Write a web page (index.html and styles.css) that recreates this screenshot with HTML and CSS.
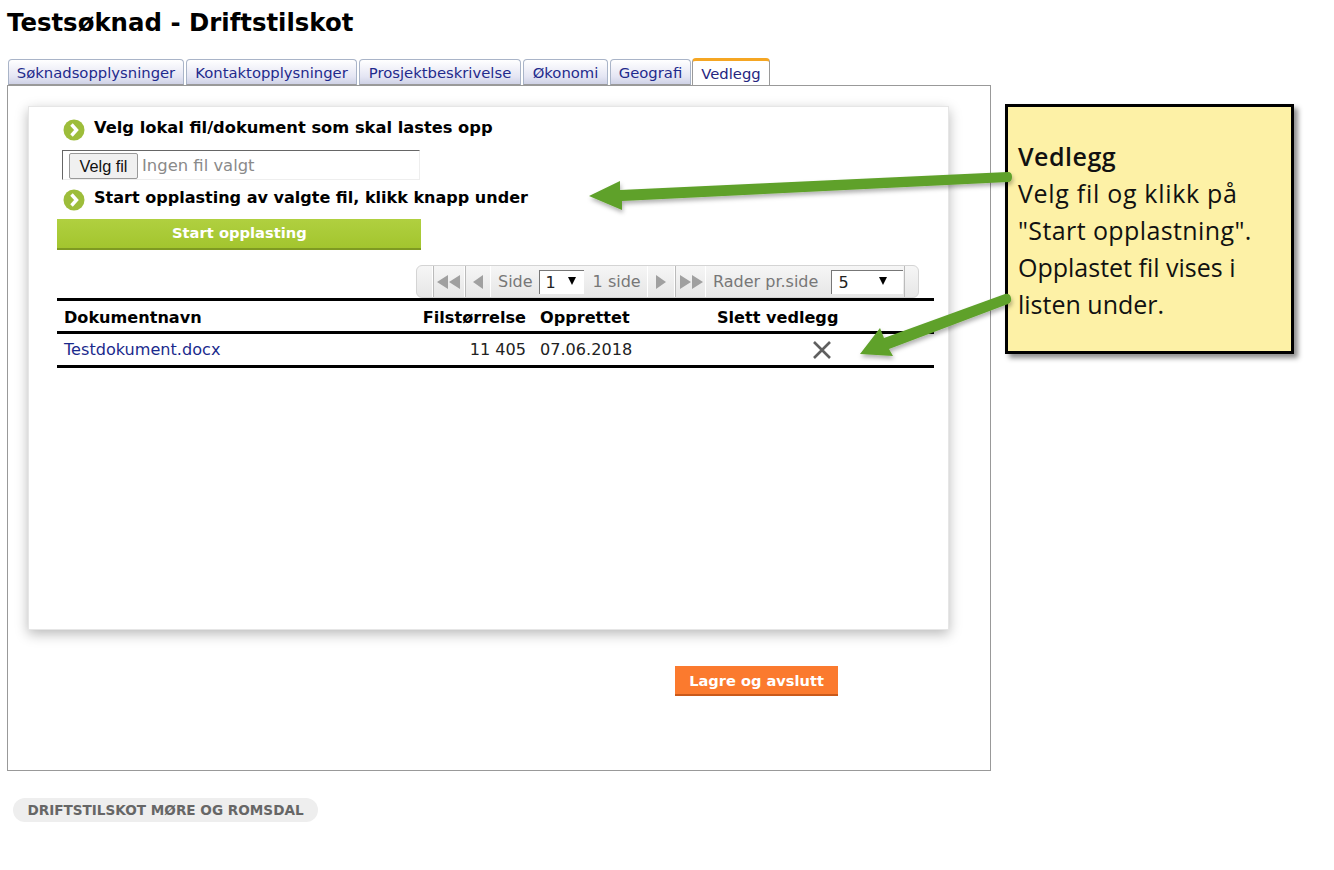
FILE: index.html
```html
<!DOCTYPE html>
<html lang="no">
<head>
<meta charset="utf-8">
<title>Testsøknad - Driftstilskot</title>
<link rel="stylesheet" href="styles.css">
</head>
<body>
<h1 class="title">Testsøknad - Driftstilskot</h1>
<ul class="tabs">
  <li class="tab tab-1">Søknadsopplysninger</li>
  <li class="tab tab-2">Kontaktopplysninger</li>
  <li class="tab tab-3">Prosjektbeskrivelse</li>
  <li class="tab tab-4">Økonomi</li>
  <li class="tab tab-5">Geografi</li>
  <li class="tab tab-active">Vedlegg</li>
</ul>
<main class="panel">
  <section class="card">
    <div class="step step-first">
      <svg class="step-icon" viewBox="0 0 22 22"><circle cx="11" cy="11" r="10.5" fill="#9dbd3a"/><path d="M8.5 5.5 L13.5 11 L8.5 16.5" fill="none" stroke="#fff" stroke-width="3.4"/></svg>
      <span>Velg lokal fil/dokument som skal lastes opp</span>
    </div>
    <div class="file-field">
      <span class="file-btn">Velg fil</span>
      <span class="file-name">Ingen fil valgt</span>
    </div>
    <div class="step step-second">
      <svg class="step-icon" viewBox="0 0 22 22"><circle cx="11" cy="11" r="10.5" fill="#9dbd3a"/><path d="M8.5 5.5 L13.5 11 L8.5 16.5" fill="none" stroke="#fff" stroke-width="3.4"/></svg>
      <span>Start opplasting av valgte fil, klikk knapp under</span>
    </div>
    <div class="upload-btn"><span class="upload-label">Start opplasting</span></div>
    <div class="pager-row">
      <div class="pager">
        <span class="pg-cap pg-cap-left"></span>
        <span class="pg-btn pg-first"><svg width="26" height="16" viewBox="0 0 26 16"><path d="M12 1V15L1 8ZM24 1V15L13 8Z" fill="#a0a0a0"/></svg></span>
        <span class="pg-btn pg-prev"><svg width="12" height="16" viewBox="0 0 12 16"><path d="M11 1V15L1 8Z" fill="#a0a0a0"/></svg></span>
        <span class="pg-section pg-side">
          <span class="pg-label">Side</span>
          <span class="pg-select pg-select-page"><span>1</span><i class="caret"></i></span>
          <span class="pg-label pg-count">1 side</span>
        </span>
        <span class="pg-btn pg-next"><svg width="12" height="16" viewBox="0 0 12 16"><path d="M1 1V15L11 8Z" fill="#a0a0a0"/></svg></span>
        <span class="pg-btn pg-last"><svg width="26" height="16" viewBox="0 0 26 16"><path d="M2 1V15L13 8ZM14 1V15L25 8Z" fill="#a0a0a0"/></svg></span>
        <span class="pg-section pg-rows">
          <span class="pg-label">Rader pr.side</span>
          <span class="pg-select pg-select-rows"><span>5</span><i class="caret"></i></span>
        </span>
        <span class="pg-cap pg-cap-right"></span>
      </div>
    </div>
    <table class="docs">
      <thead>
        <tr><th class="c-name">Dokumentnavn</th><th class="c-size">Filstørrelse</th><th class="c-date">Opprettet</th><th class="c-del">Slett vedlegg</th></tr>
      </thead>
      <tbody>
        <tr>
          <td class="c-name"><a class="doc-link" href="#">Testdokument.docx</a></td>
          <td class="c-size">11 405</td>
          <td class="c-date">07.06.2018</td>
          <td class="c-del"><svg class="del-icon" width="20" height="18" viewBox="0 0 20 18"><path d="M2 1 L18 17 M18 1 L2 17" stroke="#5f5f5f" stroke-width="2.6" fill="none"/></svg></td>
        </tr>
      </tbody>
    </table>
  </section>
  <div class="save-row"><span class="save-btn">Lagre og avslutt</span></div>
</main>
<footer class="foot"><span class="foot-pill">DRIFTSTILSKOT MØRE OG ROMSDAL</span></footer>

<aside class="callout">
  <div class="callout-text">
    <strong class="line line-head">Vedlegg</strong>
    <span class="line line-1">Velg fil og klikk på</span>
    <span class="line line-2">"Start opplastning".</span>
    <span class="line">Opplastet fil vises i</span>
    <span class="line">listen under.</span>
  </div>
</aside>
<svg class="arrows" width="1334" height="870" viewBox="0 0 1334 870">
  <defs><filter id="ashadow" x="-10%" y="-30%" width="120%" height="170%"><feDropShadow dx="1" dy="3" stdDeviation="2" flood-color="#000" flood-opacity=".3"/></filter></defs>
  <path filter="url(#ashadow)" fill="#5fa12a" d="M589 196 L620 181 L620 190 L1008 172 Q1012 172 1012 177 Q1012 182 1008 182 L622 201 L622 210 Z"/>
  <path filter="url(#ashadow)" fill="#5fa12a" d="M860 354 L880 328 L884 338 L1005 294 Q1010 293 1011 298 Q1012 302 1008 304 L889 349 L893 356 Z"/>
</svg>
</body>
</html>
```
FILE: styles.css
```css
* { box-sizing: border-box; }
html, body { margin: 0; padding: 0; background: #fff; }
body {
  width: 1334px;
  height: 870px;
  overflow: hidden;
  position: relative;
  font-family: "DejaVu Sans", Verdana, sans-serif;
  font-size: 14px;
  color: #000;
  padding: 0 0 0 7px;
}
.title {
  margin: 0;
  padding-top: 9px;
  height: 59px;
  font-size: 24.4px;
  line-height: 28px;
  font-weight: bold;
}
.tabs {
  list-style: none;
  margin: 0;
  padding: 0 0 0 1px;
  display: flex;
  height: 26px;
  position: relative;
  z-index: 1;
}
.tab {
  height: 26px;
  margin-right: 2px;
  border: 1px solid #a9b4c8;
  border-bottom: 1px solid #9a9a9a;
  border-radius: 4px 4px 0 0;
  background: linear-gradient(#ffffff, #e4e5f3 70%, #cfd2e6);
  color: #1f2a8c;
  font-size: 14.8px;
  line-height: 26px;
  text-align: center;
  white-space: nowrap;
}
.tab-1 { width: 176px; }
.tab-2 { width: 171px; }
.tab-3 { width: 162px; }
.tab-4 { width: 85px; }
.tab-5 { width: 81px; margin-right: 1px; }
.tab-active {
  width: 78px;
  height: 27px;
  margin-top: -1px;
  margin-right: 0;
  border: 1px solid #9a9a9a;
  border-top: 3px solid #f5a623;
  border-bottom: 0;
  background: #fff;
  color: #26267f;
  line-height: 25px;
}
.panel {
  width: 984px;
  height: 686px;
  border: 1px solid #999;
  padding: 20px 0 0 20px;
}
.card {
  width: 921px;
  height: 524px;
  border: 1px solid #e6e6e6;
  background: #fff;
  box-shadow: 0 4px 12px rgba(0, 0, 0, .28);
  padding: 0 13px 0 28px;
}
.step {
  display: flex;
  align-items: flex-start;
  font-weight: bold;
  line-height: 20px;
  margin-left: 6px;
  white-space: nowrap;
}
.step-first { padding-top: 11px; height: 43px; font-size: 16.3px; }
.step-second { height: 31px; margin-top: 8px; font-size: 16.05px; }
.step-icon {
  width: 22px;
  height: 22px;
  margin-right: 9px;
  margin-top: 1px;
  flex: none;
}
.step-second .step-icon { margin-top: 1px; }
.file-field {
  width: 358px;
  height: 30px;
  margin-left: 5px;
  border-top: 1px solid #666;
  border-left: 1px solid #666;
  border-right: 1px solid #eee;
  border-bottom: 1px solid #eee;
  display: flex;
  align-items: flex-start;
  padding: 2px 0 0 6px;
}
.file-btn {
  width: 69px;
  height: 26px;
  border: 1px solid #999;
  border-radius: 2px;
  background: #f0f0f0;
  font-family: "Liberation Sans", Arial, sans-serif;
  font-size: 16.3px;
  line-height: 24px;
  text-align: center;
  color: #111;
}
.file-name {
  margin-left: 4px;
  font-size: 16.4px;
  line-height: 25px;
  color: #8a8a8a;
  white-space: nowrap;
}
.upload-btn {
  width: 364px;
  height: 31px;
  background: linear-gradient(#b0d040, #a3c52e);
  border-bottom: 2px solid #7f9a22;
  color: #fff;
  font-weight: bold;
  font-size: 14.7px;
  line-height: 28px;
  padding-left: 115px;
}
.pager-row {
  padding: 15px 0 0 359px;
  height: 48px;
}
.pager {
  width: 503px;
  height: 33px;
  display: flex;
  align-items: stretch;
  border: 1px solid #d4d4d4;
  border-radius: 6px;
  background: linear-gradient(#f6f6f6, #e6e6e6);
  color: #777;
  font-size: 16px;
}
.pg-cap { width: 16px; flex: none; border-right: 1px solid #fff; }
.pg-cap-right { width: 14px; border-right: 0; border-left: 1px solid #bbb; margin-left: auto; }
.pg-btn {
  display: flex;
  align-items: center;
  justify-content: center;
  border-left: 1px solid #bbb;
  border-right: 1px solid #fff;
  flex: none;
}
.pg-first { width: 32px; }
.pg-prev { width: 26px; }
.pg-next { width: 28px; border-left: 1px solid #fff; }
.pg-last { width: 31px; }
.pg-section {
  display: flex;
  align-items: center;
  flex: none;
}
.pg-side { width: 156px; padding-left: 7px; }
.pg-rows { padding-left: 7px; }
.pg-label { white-space: nowrap; line-height: 22px; }
.pg-count { margin-left: 9px; }
.pg-select {
  display: flex;
  align-items: center;
  justify-content: space-between;
  height: 24px;
  background: #fff;
  border-top: 1px solid #777;
  border-left: 1px solid #777;
  color: #222;
  padding: 0 8px 0 6px;
}
.pg-select-page { width: 45px; margin-left: 6px; }
.pg-select-rows { width: 72px; margin-left: 13px; padding-right: 16px; }
.caret {
  display: block;
  width: 0;
  height: 0;
  border-left: 4px solid transparent;
  border-right: 4px solid transparent;
  border-top: 8px solid #000;
  margin-top: -3px;
}
.docs {
  width: 877px;
  border-collapse: collapse;
  table-layout: fixed;
  font-size: 16.1px;
  border-top: 3px solid #000;
}
.docs th {
  height: 33px;
  padding: 3px 7px 0;
  font-weight: bold;
  text-align: left;
  border-bottom: 3px solid #000;
  white-space: nowrap;
}
.docs td {
  height: 34px;
  padding: 0 7px;
  border-bottom: 3px solid #000;
  color: #222;
  white-space: nowrap;
}
.c-name { width: 280px; }
.c-size { width: 196px; text-align: right !important; }
.c-date { width: 177px; }
.c-del { width: 224px; }
td.c-del { padding-left: 102px; }
.doc-link { color: #1a2a8c; text-decoration: none; }
.del-icon { display: block; margin-top: 1px; }
.save-row {
  padding: 36px 0 0 647px;
}
.save-btn {
  display: block;
  width: 163px;
  height: 30px;
  background: #fb7a2e;
  border-bottom: 2px solid #c9591a;
  color: #fff;
  font-weight: bold;
  font-size: 14.6px;
  line-height: 29px;
  text-align: center;
}
.foot { padding: 27px 0 0 6px; }
.foot-pill {
  display: inline-block;
  height: 24px;
  width: 305px;
  border-radius: 12px;
  background: #eeeeee;
  color: #666;
  font-weight: bold;
  font-size: 13.6px;
  line-height: 24px;
  text-align: center;
  white-space: nowrap;
}
.callout {
  position: absolute;
  left: 1005px;
  top: 104px;
  width: 289px;
  height: 250px;
  background: #fdf1a6;
  border: 3px solid #000;
  box-shadow: 4px 4px 5px rgba(0, 0, 0, .45);
  padding: 31px 0 0 10px;
}
.callout-text {
  font-family: "Open Sans", "Noto Sans", sans-serif;
  font-size: 25px;
  line-height: 37px;
  color: #111;
}
.line { display: block; white-space: nowrap; }
.line-head { font-weight: 600; letter-spacing: .5px; }
.line-1 { letter-spacing: .7px; }
.line-2 { letter-spacing: .4px; }
.arrows {
  position: absolute;
  left: 0;
  top: 0;
  pointer-events: none;
}
```
